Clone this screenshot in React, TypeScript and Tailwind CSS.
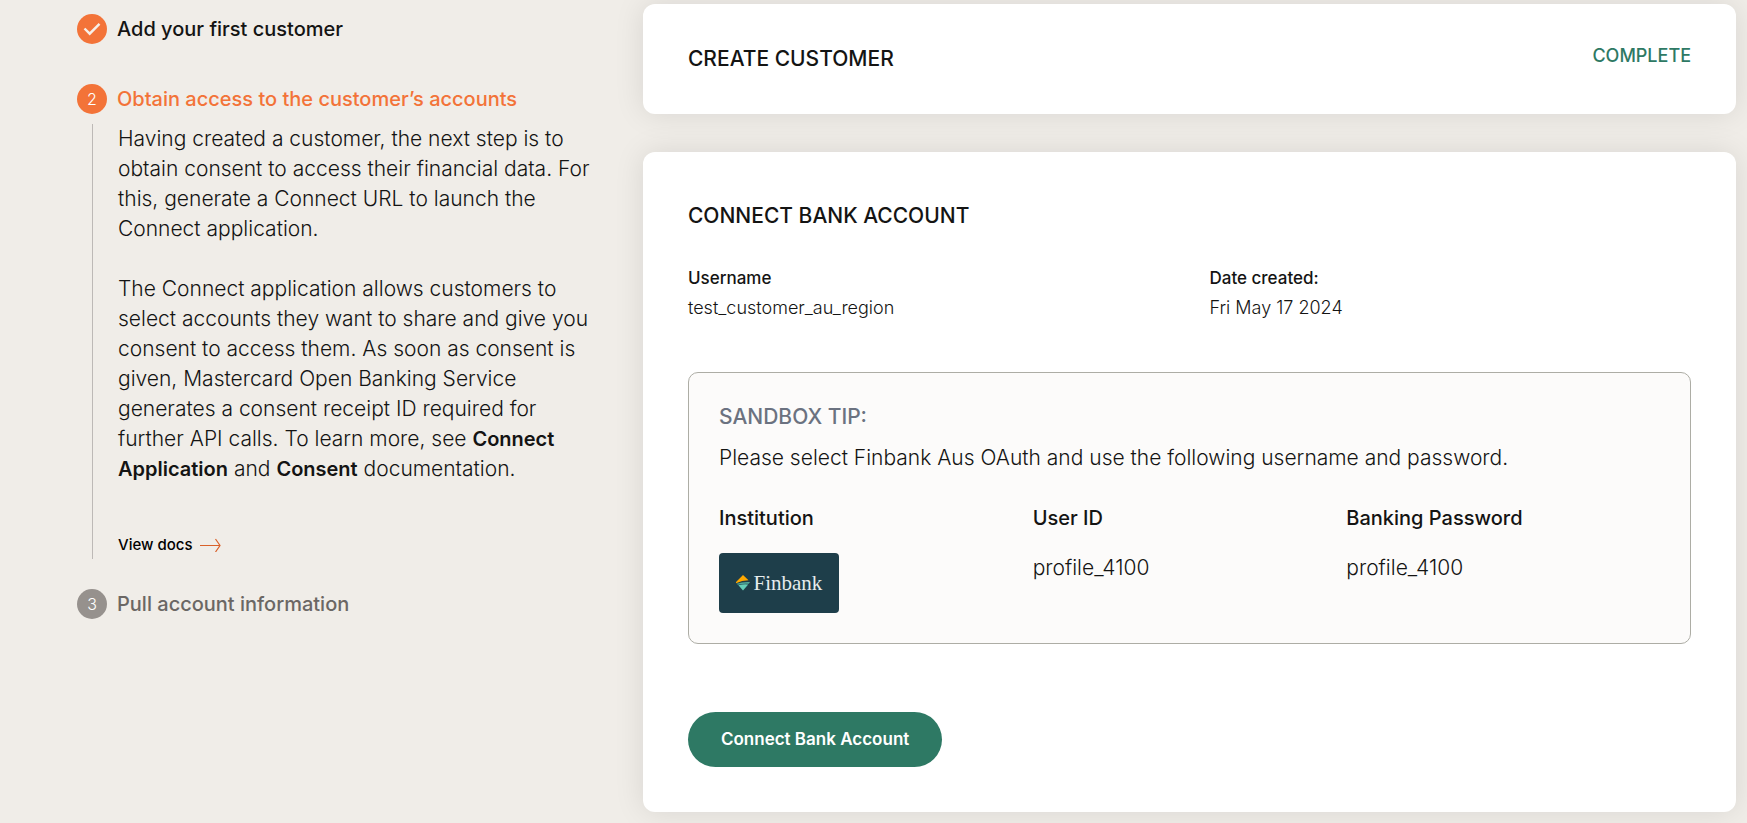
import type { ReactNode } from "react";

function StepBadge({ tone, children }: { tone: "active" | "idle"; children: ReactNode }) {
  return (
    <span
      className={`flex size-[30px] shrink-0 items-center justify-center rounded-full text-base font-light text-white ${
        tone === "active" ? "bg-[#f37338]" : "bg-[#96918d]"
      }`}
    >
      {children}
    </span>
  );
}

function Field({ label, value }: { label: string; value: string }) {
  return (
    <div className="leading-[30px]">
      <dt className="text-[17px] font-medium">{label}</dt>
      <dd className="text-lg leading-[30px] font-light">{value}</dd>
    </div>
  );
}

function Credential({ label, children }: { label: string; children: ReactNode }) {
  return (
    <div className="flex flex-col gap-5">
      <dt className="text-xl leading-[30px] font-medium">{label}</dt>
      <dd className="text-[21px] leading-[30px] font-light">{children}</dd>
    </div>
  );
}

function FinbankLogo() {
  return (
    <div className="flex h-[60px] w-[120px] items-center justify-center gap-1 rounded bg-[#1e3e4a]">
      <svg width="14" height="16" viewBox="0 0 14 16" aria-hidden="true">
        <path d="M7 0 L12.5 5.2 Q6 5.4 0 8.2 L0 7 Z" fill="#ffa800" />
        <path d="M0.6 8.8 Q7 6.4 14 7 L12.8 8.8 Q7 8.2 2 9.8 Z" fill="#4fa898" />
        <path d="M2.4 10.3 Q7 9 12.2 9.5 L7 15.6 Z" fill="#63cdb8" />
      </svg>
      <span className="font-['Liberation_Serif',serif] text-[21px] leading-none text-[#e6eced]">Finbank</span>
    </div>
  );
}

const card = "rounded-xl bg-white p-[45px] shadow-[0_0_30px_rgba(0,0,0,0.1)]";
const docLink = "text-xl leading-none font-semibold";

export default function App() {
  return (
    <div className="grid min-h-screen grid-cols-[10fr_17fr] items-start bg-[#f0ede8] pr-[11px] font-['Inter',sans-serif] text-[#141413]">
      <aside className="pt-[14px] pl-[77px]">
        <ol className="text-xl leading-[30px]">
          <li className="flex gap-[10px]">
            <StepBadge tone="active">
              <svg width="18" height="14" viewBox="0 0 18 14" fill="none" stroke="#f7f0e8" strokeWidth="2.4" aria-label="Done">
                <path d="M1.5 6.5 L6.7 11.7 L16.5 1.8" />
              </svg>
            </StepBadge>
            <h2 className="font-medium">Add your first customer</h2>
          </li>
          <li className="mt-10">
            <div className="flex gap-[10px]">
              <StepBadge tone="active">2</StepBadge>
              <h2 className="font-medium text-[#f37338]">Obtain access to the customer’s accounts</h2>
            </div>
            <div className="mt-[10px] ml-[15px] border-l border-[#bdb9b6] pl-[25px]">
              <div className="flex max-w-[478px] flex-col gap-[30px] text-[21px] font-light">
                <p>
                  Having created a customer, the next step is to obtain consent to access their financial data. For
                  this, generate a Connect URL to launch the Connect application.
                </p>
                <p>
                  The Connect application allows customers to select accounts they want to share and give you consent
                  to access them. As soon as consent is given, Mastercard Open Banking Service generates a consent
                  receipt ID required for further API calls. To learn more, see{" "}
                  <a href="#connect-application" className={docLink}>Connect Application</a> and{" "}
                  <a href="#consent" className={docLink}>Consent</a> documentation.
                </p>
              </div>
              <a href="#docs" className="mt-[47px] flex items-center gap-2 text-[15px] leading-7 font-medium text-black">
                View docs
                <svg width="21" height="14" viewBox="0 0 21 14" fill="none" stroke="#d9612a" strokeWidth="1.2" aria-hidden="true">
                  <path d="M0 7.5 H20 M15.5 1 L20 7.5 L15.5 14" />
                </svg>
              </a>
            </div>
          </li>
          <li className="mt-[30px] flex gap-[10px]">
            <StepBadge tone="idle">3</StepBadge>
            <h2 className="font-medium text-[#6b6764]">Pull account information</h2>
          </li>
        </ol>
      </aside>

      <main className="flex flex-col gap-[38px] pt-1">
        <section className={`${card} flex h-[110px] items-center justify-between`}>
          <h2 className="text-[21px] font-medium">CREATE CUSTOMER</h2>
          <span className="mb-[6px] text-lg font-medium text-[#2e7964]">COMPLETE</span>
        </section>

        <section className={card}>
          <h2 className="text-[21px] leading-[38px] font-medium">CONNECT BANK ACCOUNT</h2>
          <dl className="mt-7 grid grid-cols-2 gap-10">
            <Field label="Username" value="test_customer_au_region" />
            <Field label="Date created:" value="Fri May 17 2024" />
          </dl>

          <div className="mt-[49px] rounded-[10px] border border-[#adada5] bg-[#fcfbfa] p-[30px]">
            <h3 className="text-[21px] leading-7 font-medium text-[#6b7280]">SANDBOX TIP:</h3>
            <p className="mt-3 text-[21px] leading-[30px] font-light">
              Please select Finbank Aus OAuth and use the following username and password.
            </p>
            <dl className="mt-[30px] grid grid-cols-3">
              <Credential label="Institution">
                <FinbankLogo />
              </Credential>
              <Credential label="User ID">profile_4100</Credential>
              <Credential label="Banking Password">profile_4100</Credential>
            </dl>
          </div>

          <button type="button" className="mt-[68px] block h-[55px] rounded-full bg-[#2e7964] px-[33px] text-[17px] font-semibold text-white">
            Connect Bank Account
          </button>
        </section>
      </main>
    </div>
  );
}
